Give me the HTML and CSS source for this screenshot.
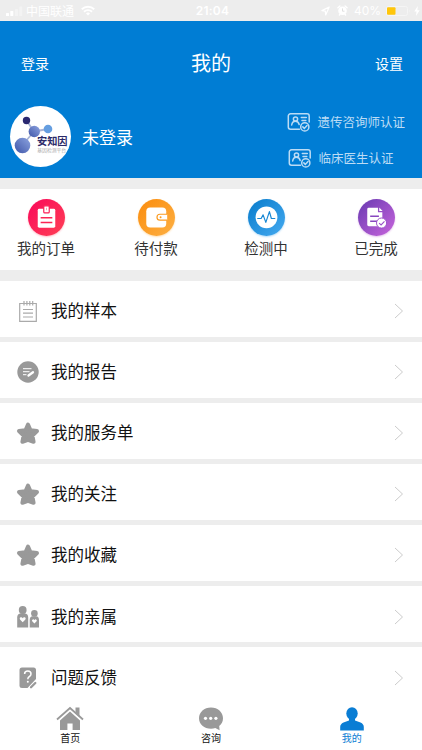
FILE: index.html
```html
<!DOCTYPE html>
<html lang="zh-CN">
<head>
    <meta charset="UTF-8">
    <meta name="viewport" content="width=device-width, initial-scale=1.0">
    <title>我的</title>
    <link rel="stylesheet" href="styles.css">
</head>
<body>
    <svg class="defs" width="0" height="0">
        <defs>
            <linearGradient id="ball" x1="0" y1="1" x2="1" y2="0">
                <stop offset="0" stop-color="#3f55a8"/>
                <stop offset="1" stop-color="#8da4e0"/>
            </linearGradient>
            <symbol id="star" viewBox="0 0 24 24">
                <path d="M12 3.500l2.500 5.700 6.500 .8-4.600 4.500 1.200 6.300-5.600-2-5.600 2 1.200-6.300L3 10l6.500-.8z" fill="#999" stroke="#999" stroke-width="4" stroke-linejoin="round"/>
            </symbol>
            <symbol id="cert" viewBox="0 0 24 20">
                <g fill="none" stroke="currentColor" stroke-width="1.500" stroke-linecap="round">
                    <path d="M12.500 17.200H3.500a2.200 2.200 0 0 1-2.200-2.200V4a2.200 2.200 0 0 1 2.200-2.200h16.500a2.200 2.200 0 0 1 2.200 2.200v6"/>
                    <circle cx="8.500" cy="7" r="2.100"/>
                    <path d="M4.700 13c.3-2.400 1.800-3.700 3.800-3.700s3.300 1.300 3.700 3.200M14.300 5.500h5M15 8.500h3.800"/>
                    <circle cx="17.800" cy="14.900" r="4.100"/>
                    <path d="M15.800 14.900l1.500 1.500 2.700-2.900"/>
                </g>
            </symbol>
        </defs>
    </svg>

    <div class="status">
        <div class="status-left">
            <svg width="18" height="12" viewBox="0 0 18 12" fill="#fff">
                <rect x="1" y="8" width="3" height="3" rx=".6"/>
                <rect x="5.300" y="6" width="3" height="5" rx=".6"/>
                <rect x="10" y="4" width="3" height="7" rx=".6" opacity=".35"/>
                <rect x="14.300" y="1.500" width="3" height="9.500" rx=".6" opacity=".35"/>
            </svg>
            <span class="carrier">中国联通</span>
            <svg width="14" height="11" viewBox="0 0 14 11" fill="none" stroke="#fff" stroke-width="1.900">
                <path d="M.8 4.200a9 9 0 0 1 12.400 0M3 6.700a5.800 5.800 0 0 1 8 0"/>
                <path d="M5 8.400a3 3 0 0 1 4 0L7 10.500z" fill="#fff" stroke="none"/>
            </svg>
        </div>
        <div class="status-time">21:04</div>
        <div class="status-right">
            <svg width="9" height="10" viewBox="0 0 9 10" fill="none" stroke="#fff" stroke-width="1.200" stroke-linejoin="round">
                <path d="M8.200 1L.9 4.600l3.400.5.400 3.800z"/>
            </svg>
            <svg class="alarm" width="11" height="11" viewBox="0 0 11 11">
                <circle cx="5.500" cy="5.800" r="4.300" fill="#fff"/>
                <path d="M.9 2.800L2.900 1M10.100 2.800L8.100 1M2.400 10l1-1.200M8.600 10l-1-1.200" stroke="#fff" stroke-width="1.400" stroke-linecap="round"/>
                <path d="M5.500 3.400v2.800h2" fill="none" stroke="#ddd" stroke-width=".9"/>
            </svg>
            <span class="percent">40%</span>
            <svg width="25" height="10" viewBox="0 0 25 10">
                <rect x=".5" y=".5" width="21" height="9" rx="2" fill="none" stroke="#f5f5f5"/>
                <rect x="1" y="1.300" width="8.500" height="7.400" rx="1" fill="#ffc60b"/>
                <path d="M23 3.500q1.300 1.500 0 3z" fill="#f5f5f5"/>
            </svg>
            <svg class="bolt" width="6" height="10" viewBox="0 0 6 10"><path d="M3.800 0L.3 5.500h2.200L2 10l3.700-5.700H3.400z" fill="#fff"/></svg>
        </div>
    </div>

    <div class="header">
        <div class="navbar">
            <span class="nav-link">登录</span>
            <span class="nav-title">我的</span>
            <span class="nav-link">设置</span>
        </div>
        <div class="profile">
            <div class="avatar">
                <svg width="61" height="61" viewBox="0 0 61 61">
                    <path d="M12.500 39L24 25.500 16.500 14.500M24 25.500L38 23" stroke="#a9b5d6" stroke-width="1.800" fill="none"/>
                    <circle cx="12.500" cy="39.500" r="7.800" fill="url(#ball)"/>
                    <circle cx="24.300" cy="25.500" r="5.700" fill="url(#ball)"/>
                    <circle cx="16.500" cy="14.500" r="3.700" fill="#2a2870"/>
                    <circle cx="38" cy="23" r="4.300" fill="#659ee0"/>
                    <text class="logo-name" x="27" y="39.300">安知因</text>
                    <text class="logo-sub" x="27.300" y="46">基因检测平台</text>
                </svg>
            </div>
            <span class="username">未登录</span>
            <div class="certs">
                <div class="cert">
                    <svg width="24" height="20"><use href="#cert"/></svg>
                    <span>遗传咨询师认证</span>
                </div>
                <div class="cert cert-doctor">
                    <svg width="24" height="20"><use href="#cert"/></svg>
                    <span>临床医生认证</span>
                </div>
            </div>
        </div>
    </div>

    <div class="shortcuts">
        <div class="shortcut">
            <div class="circle red">
                <svg width="37" height="37" viewBox="0 0 38 38">
                    <rect x="10" y="10" width="18" height="19.500" rx="1.500" fill="#fff"/>
                    <rect x="16.200" y="7" width="5.600" height="7.300" rx="1" fill="#fff" stroke="#fb1c55" stroke-width="1.200"/>
                    <path d="M19 9v2.500" stroke="#fb9aae" stroke-width="1"/>
                    <path d="M13 19.300h12M13 24.200h12" stroke="#fb2454" stroke-width="1.500"/>
                </svg>
            </div>
            <span>我的订单</span>
        </div>
        <div class="shortcut">
            <div class="circle orange">
                <svg width="37" height="37" viewBox="0 0 38 38">
                    <rect x="8.500" y="8.700" width="20.500" height="20.500" rx="4" fill="#fff"/>
                    <path d="M30 15.700h-7.500a3 3 0 0 0 0 6H30" fill="#fff" stroke="#fb9b20" stroke-width="1.200"/>
                    <circle cx="23.200" cy="18.700" r="1" fill="#fb9b20"/>
                </svg>
            </div>
            <span>待付款</span>
        </div>
        <div class="shortcut">
            <div class="circle blue">
                <svg width="37" height="37" viewBox="0 0 38 38">
                    <circle cx="19" cy="18.800" r="11.200" fill="#fff"/>
                    <path d="M9.500 20h4l2-3.700 2.800 7.700 3.700-11 2 7h4" fill="none" stroke="#1787d4" stroke-width="1.200" stroke-linejoin="round"/>
                </svg>
            </div>
            <span>检测中</span>
        </div>
        <div class="shortcut">
            <div class="circle purple">
                <svg width="37" height="37" viewBox="0 0 38 38">
                    <path d="M11 9h9.500v4.500H25V28H11a1.500 1.500 0 0 1-1.500-1.500v-16A1.500 1.500 0 0 1 11 9z" fill="#fff"/>
                    <path d="M21.800 8.800l3.500 3.500h-3.500z" fill="#fff"/>
                    <path d="M12.500 17.700h9M12.500 22.800h7" stroke="#8747bf" stroke-width="1.500"/>
                    <circle cx="24.200" cy="24.700" r="5.200" fill="#fff" stroke="#9a50c8"/>
                    <path d="M21.700 24.700l2 1.900 3.500-3.700" fill="none" stroke="#9a50c8" stroke-width="1.100"/>
                </svg>
            </div>
            <span>已完成</span>
        </div>
    </div>

    <div class="menu">
        <div class="item">
            <svg class="icon" width="24" height="24" viewBox="0 0 24 24" fill="none" stroke="#aaa" stroke-width="1.200">
                <path d="M3.700 4.500h16.600v17.800H3.700zM7 10.500h10M7 14.200h10M7 18h10"/>
                <path d="M8 2v4.500M10.900 2v4.500M13.800 2v4.500M16.700 2v4.500"/>
            </svg>
            <span class="label">我的样本</span>
            <svg class="arrow" width="10" height="16" viewBox="0 0 10 16"><path d="M1 1l7.500 7L1 15"/></svg>
        </div>
        <div class="item">
            <svg class="icon" width="24" height="24" viewBox="0 0 24 24">
                <circle cx="12" cy="12" r="10.700" fill="#999"/>
                <path d="M7 8.700h8.500M7 11.700h6.500M7 14.700h3.500" stroke="#fff" stroke-width="1"/>
                <path d="M12.500 15.500l4.500-3.300" stroke="#fff" stroke-width="2.300" stroke-linecap="round"/>
            </svg>
            <span class="label">我的报告</span>
            <svg class="arrow" width="10" height="16" viewBox="0 0 10 16"><path d="M1 1l7.500 7L1 15"/></svg>
        </div>
        <div class="item">
            <svg class="icon" width="24" height="24"><use href="#star"/></svg>
            <span class="label">我的服务单</span>
            <svg class="arrow" width="10" height="16" viewBox="0 0 10 16"><path d="M1 1l7.500 7L1 15"/></svg>
        </div>
        <div class="item">
            <svg class="icon" width="24" height="24"><use href="#star"/></svg>
            <span class="label">我的关注</span>
            <svg class="arrow" width="10" height="16" viewBox="0 0 10 16"><path d="M1 1l7.500 7L1 15"/></svg>
        </div>
        <div class="item">
            <svg class="icon" width="24" height="24"><use href="#star"/></svg>
            <span class="label">我的收藏</span>
            <svg class="arrow" width="10" height="16" viewBox="0 0 10 16"><path d="M1 1l7.500 7L1 15"/></svg>
        </div>
        <div class="item">
            <svg class="icon" width="24" height="24" viewBox="0 0 24 24" fill="#999">
                <circle cx="6.700" cy="5" r="3.900"/>
                <path d="M1.200 22.500V12.500Q1.200 8.700 5 8.300h3.500q3.700.4 3.700 4.200v10z"/>
                <circle cx="18.400" cy="8.400" r="3.300"/>
                <path d="M13.700 22.500v-7.700q0-3.300 3-3.600h3.400q2.900.3 2.900 3.600v7.700z"/>
                <path d="M6.700 17.200L4 14.500q-.9-1.600.6-2.200 1.400-.4 2.100 1 .7-1.400 2.100-1 1.500.6.6 2.200zM18.400 18.500l-2.200-2.300q-.7-1.400.5-1.800 1.200-.3 1.700.8.500-1.100 1.700-.8 1.200.4.5 1.800z" fill="#fff"/>
            </svg>
            <span class="label">我的亲属</span>
            <svg class="arrow" width="10" height="16" viewBox="0 0 10 16"><path d="M1 1l7.500 7L1 15"/></svg>
        </div>
        <div class="item">
            <svg class="icon" width="24" height="24" viewBox="0 0 24 24">
                <path d="M6 1.500h11.500a2.500 2.500 0 0 1 2.500 2.500v9L11.500 22H6a2.500 2.500 0 0 1-2.500-2.500V4A2.500 2.500 0 0 1 6 1.500z" fill="#999"/>
                <path d="M8.600 8q0-3 3.200-3T15 8q0 1.500-1.600 2.500-1.600.9-1.600 2.700" fill="none" stroke="#fff" stroke-width="1.500"/>
                <circle cx="11.800" cy="15.700" r="1" fill="#fff"/>
                <path d="M15 21.300l4.300-4.300" stroke="#999" stroke-width="2.300" stroke-linecap="round"/>
            </svg>
            <span class="label">问题反馈</span>
            <svg class="arrow" width="10" height="16" viewBox="0 0 10 16"><path d="M1 1l7.500 7L1 15"/></svg>
        </div>
    </div>

    <div class="tabbar">
        <div class="tab">
            <svg width="28" height="25" viewBox="0 0 28 25" fill="#999">
                <path d="M14 5.500l10 9V24h-7.400v-6.500h-5.200V24H4v-9.500z"/>
                <path d="M1 13.500L14 2l13 11.500" fill="none" stroke="#999" stroke-width="1.800"/>
                <path d="M19.500 1.500h4V11l-4-3.500z"/>
            </svg>
            <span>首页</span>
        </div>
        <div class="tab">
            <svg width="28" height="25" viewBox="0 0 28 25">
                <path d="M14 1.500c6.800 0 12 4.600 12 10.700 0 3.500-1.500 6-3.800 7.800l.4 4.300-4.300-2.200c-1.300.4-2.700.6-4.300.6-6.800 0-12-4.400-12-10.500S7.200 1.500 14 1.500z" fill="#999"/>
                <g fill="#fff"><circle cx="8.500" cy="12.300" r="1.600"/><circle cx="13.700" cy="12.300" r="1.600"/><circle cx="18.900" cy="12.300" r="1.600"/></g>
            </svg>
            <span>咨询</span>
        </div>
        <div class="tab active">
            <svg width="28" height="25" viewBox="0 0 28 25" fill="#0a7dd4">
                <ellipse cx="14" cy="7.500" rx="5.700" ry="6.300"/>
                <path d="M11 12h6v2.500l5.500 2q3.300 1.500 3.300 4.500v3.500H2.200V21q0-3 3.300-4.500l5.500-2z"/>
            </svg>
            <span>我的</span>
        </div>
    </div>
</body>
</html>
```
FILE: styles.css
```css
* {
    box-sizing: border-box;
}
body {
    margin: 0;
    height: 750px;
    display: flex;
    flex-direction: column;
    overflow: hidden;
    background-color: #ededed;
    font-family: "Noto Sans CJK SC", sans-serif;
    color: #111;
}
svg {
    display: block;
    flex-shrink: 0;
}
.defs {
    position: absolute;
}
.status {
    height: 20.500px;
    flex-shrink: 0;
    display: grid;
    grid-template-columns: 1fr auto 1fr;
    align-items: center;
    padding: 0 5px;
    color: #fff;
    font-size: 12px;
    line-height: 20px;
}
.status-left, .status-right {
    display: flex;
    align-items: center;
}
.status-right {
    justify-content: flex-end;
}
.carrier {
    margin: 0 7px 0 3px;
}
.status-time {
    padding: 1px 0 0 3px;
    font-family: Inter, sans-serif;
    font-weight: 600;
    letter-spacing: .2px;
}
.alarm {
    margin: 0 6px 0 7px;
}
.percent {
    margin-right: 5px;
    font-family: Inter, sans-serif;
    font-size: 12px;
}
.bolt {
    margin-left: 3px;
    margin-right: -3px;
}
.header {
    height: 157.500px;
    flex-shrink: 0;
    background-color: #007dd4;
    color: #fff;
}
.navbar {
    height: 85px;
    display: flex;
    align-items: center;
    justify-content: space-between;
    padding: 0 19px 1px 21px;
}
.nav-link {
    font-size: 14px;
}
.nav-title {
    margin-right: 2px;
    font-size: 20px;
}
.profile {
    height: 61px;
    display: flex;
    align-items: center;
    padding: 0 17px 0 10px;
}
.avatar {
    width: 61px;
    height: 61px;
    border-radius: 50%;
    background-color: #fff;
}
.logo-name {
    font-size: 10.200px;
    font-weight: 700;
    fill: #2c2a68;
}
.logo-sub {
    font-size: 4.800px;
    fill: #aaa;
}
.username {
    margin-left: 11px;
    font-size: 17px;
}
.certs {
    margin-left: auto;
    padding-top: 8px;
    display: flex;
    flex-direction: column;
    gap: 16px;
    color: #bcdcf5;
    font-size: 12.500px;
    line-height: 20px;
}
.cert {
    display: flex;
    align-items: center;
    gap: 6px;
    height: 20px;
}
.cert-doctor {
    padding-left: 1px;
}
.shortcuts {
    height: 81px;
    flex-shrink: 0;
    margin: 11px 0 10.500px;
    padding: 10px .5px 0;
    display: flex;
    justify-content: space-between;
    background-color: #fff;
    color: #333;
    font-size: 14.500px;
    line-height: 23px;
}
.shortcut {
    width: 91px;
    display: flex;
    flex-direction: column;
    align-items: center;
}
.circle {
    width: 37px;
    height: 37px;
    border-radius: 50%;
}
.red {
    background: linear-gradient(135deg, #f9085a, #ff4055);
    box-shadow: 0 1px 2px #ffc0ca;
}
.orange {
    background: linear-gradient(135deg, #fb8c0c, #fdb044);
    box-shadow: 0 1px 2px #ffe0b5;
}
.blue {
    background: linear-gradient(135deg, #077bcb, #45aaf0);
    box-shadow: 0 1px 2px #b5dcf8;
}
.purple {
    background: linear-gradient(135deg, #6839b1, #c865dc);
    box-shadow: 0 1px 2px #e6c5ee;
}
.menu {
    flex: 1;
    min-height: 0;
    overflow: hidden;
}
.item {
    height: 56.100px;
    margin-bottom: 5px;
    padding: 5px 18px 0 16px;
    display: flex;
    align-items: center;
    background-color: #fff;
}
.label {
    margin-left: 11px;
    padding-bottom: 2px;
    font-size: 16.500px;
}
.arrow {
    margin-left: auto;
    fill: none;
    stroke: #ccc;
    stroke-width: 1;
}
.tabbar {
    height: 48px;
    flex-shrink: 0;
    padding-top: 4px;
    display: grid;
    grid-template-columns: repeat(3, 1fr);
    background-color: #fff;
    font-size: 10px;
    line-height: 13px;
}
.tab {
    display: flex;
    flex-direction: column;
    align-items: center;
}
.active {
    color: #0a7dd4;
}
```
